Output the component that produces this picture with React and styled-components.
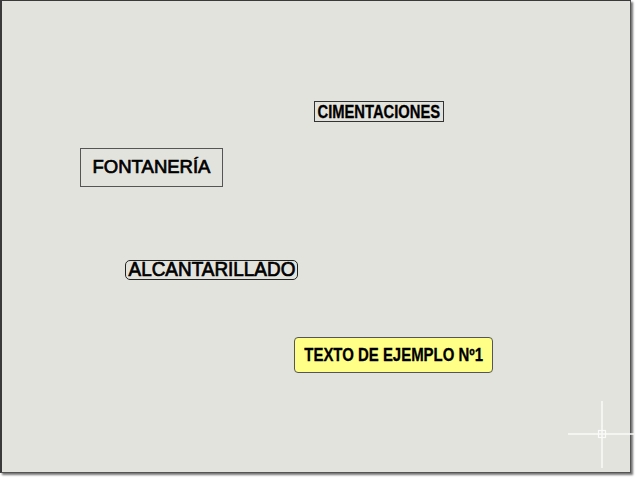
import React from 'react';
import styled, { createGlobalStyle } from 'styled-components';

const GlobalStyle = createGlobalStyle`
  html, body {
    margin: 0;
    padding: 0;
    background: #ffffff;
  }
`;

const Page = styled.div`
  width: 640px;
  height: 483px;
  position: relative;
  overflow: hidden;
  background: #ffffff;
`;

// Lienzo de dibujo con su sombra
const Canvas = styled.div`
  position: relative;
  width: 628px;
  height: 471px;
  background: #e3e3dd;
  border-top: 1px solid #3a3a3a;
  border-left: 2px solid #3a3a3a;
  border-right: 1px solid #555;
  border-bottom: 1px solid #555;
  box-shadow: 2px 2px 2px rgba(0, 0, 0, 0.55);
`;

// Textos colocados en el lienzo (su posición es el contenido)
const Label = styled.div`
  position: absolute;
  left: ${(p) => p.$x}px;
  top: ${(p) => p.$y}px;
  width: ${(p) => p.$w}px;
  height: ${(p) => p.$h}px;
  box-sizing: border-box;
  display: flex;
  align-items: center;
  justify-content: center;
  background: ${(p) => p.$bg || 'transparent'};
  border: 1px solid ${(p) => p.$border || '#444'};
  border-radius: ${(p) => p.$radius || 0}px;
`;

const Text = styled.span`
  display: inline-block;
  font-family: "Liberation Sans", Arial, sans-serif;
  font-size: ${(p) => p.$size}px;
  line-height: 1;
  font-weight: ${(p) => (p.$bold ? 700 : 400)};
  color: #000;
  white-space: nowrap;
  -webkit-text-stroke: ${(p) => p.$stroke || 0}px #000;
  transform: scaleX(${(p) => p.$sx || 1});
  transform-origin: center;
`;

const Cross = styled.svg`
  position: absolute;
  left: 566px;
  top: 400px;
`;

export default function App() {
  return (
    <Page>
      <GlobalStyle />
      <Canvas>
        <Label $x={312} $y={100} $w={130} $h={21} $border="#333">
          <Text $size={18} $bold $stroke={0.3} $sx={0.82}>CIMENTACIONES</Text>
        </Label>
        <Label $x={78} $y={147} $w={143} $h={39} $border="#555">
          <Text $size={18.5} $stroke={0.7}>FONTANERÍA</Text>
        </Label>
        <Label $x={123} $y={259} $w={173} $h={20} $radius={5} $border="#222">
          <Text $size={19.5} $stroke={0.7} $sx={0.97}>ALCANTARILLADO</Text>
        </Label>
        <Label $x={292} $y={336} $w={199} $h={36} $radius={4} $bg="#ffff88" $border="#555">
          <Text $size={18} $bold $stroke={0.3} $sx={0.83}>TEXTO DE EJEMPLO Nº1</Text>
        </Label>
        <Cross width="66" height="70" viewBox="0 0 66 70">
          <line x1="34" y1="0" x2="34" y2="67" stroke="#fafaf8" strokeWidth="1.5" />
          <line x1="0" y1="33" x2="66" y2="33" stroke="#fafaf8" strokeWidth="1.5" />
          <rect x="30.5" y="29.5" width="7" height="7" fill="none" stroke="#fafaf8" strokeWidth="1.2" />
        </Cross>
      </Canvas>
    </Page>
  );
}
